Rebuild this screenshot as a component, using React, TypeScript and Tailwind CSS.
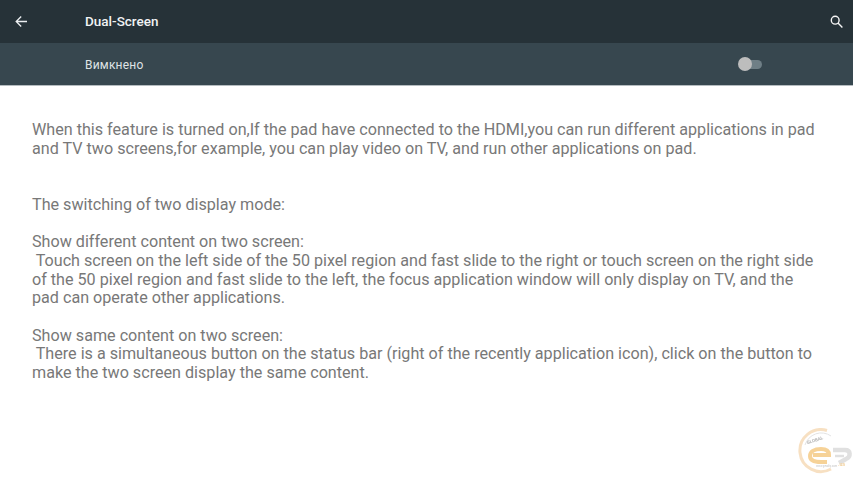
const lines = [
  "When this feature is turned on,If the pad have connected to the HDMI,you can run different applications in pad",
  "and TV two screens,for example, you can play video on TV, and run other applications on pad.",
  "\u00a0",
  "\u00a0",
  "The switching of two display mode:",
  "\u00a0",
  "Show different content on two screen:",
  " Touch screen on the left side of the 50 pixel region and fast slide to the right or touch screen on the right side",
  "of the 50 pixel region and fast slide to the left, the focus application window will only display on TV, and the",
  "pad can operate other applications.",
  "\u00a0",
  "Show same content on two screen:",
  " There is a simultaneous button on the status bar (right of the recently application icon), click on the button to",
  "make the two screen display the same content.",
];

export default function App() {
  return (
    <div className="relative w-[853px] h-[480px] overflow-hidden bg-white font-['Roboto',sans-serif]">
      <header className="h-[43px] bg-[#263238] flex items-center text-white">
        <div className="w-[85px] pl-[15px] flex items-center">
          <svg width="13" height="13" viewBox="0 0 13 13" fill="none" stroke="#eceff1" strokeWidth="1.3">
            <path d="M12 6.5H1.5M6.2 1.5 1.2 6.5l5 5" />
          </svg>
        </div>
        <h1 className="flex-1 text-[13.5px] font-medium text-[#f1f3f4]">Dual-Screen</h1>
        <div className="pr-[10px] flex items-center">
          <svg width="13" height="13" viewBox="0 0 13 13" fill="none" stroke="#f5f5f5" strokeWidth="1.4">
            <circle cx="5.2" cy="5.2" r="3.9" />
            <path d="m8 8 4.4 4.4" />
          </svg>
        </div>
      </header>
      <div className="h-[43px] bg-[#37474f] flex items-center border-b border-[#b5bcc0] pt-[1px]">
        <span className="ml-[85px] flex-1 text-[12px] tracking-[0.2px] text-[#dfe3e5]">Вимкнено</span>
        <div className="relative mr-[91px] mb-[1px] w-[24px] h-[14px] flex items-center">
          <div className="ml-[3px] w-[21px] h-[9px] rounded-full bg-[#6f7f86]" />
          <div className="absolute left-0 top-0 w-[14px] h-[14px] rounded-full bg-[#bdbdbd]" />
        </div>
      </div>
      <main className="pt-[35px] pl-[32px] text-[16.15px] leading-[18.7px] text-[#787878] whitespace-pre">
        {lines.map((l, i) => (
          <div key={i}>{l}</div>
        ))}
      </main>
      <div className="absolute left-[797px] top-[428px] w-[56px] h-[48px] opacity-80 blur-[0.5px]">
        <svg width="56" height="48" viewBox="0 0 56 48" fill="none">
          <path d="M30 2.5A21 21 0 1 0 34 41" stroke="#f6d9b4" strokeWidth="3" />
          <path d="M8 17A17 17 0 0 1 34 8" stroke="#dcdcdc" strokeWidth="1" />
          <path d="M16 27H32C32 22 28 21 24 21 17 21 13 24 13 28 13 32 17 34 24 34H30" stroke="#f5c77e" strokeWidth="4" />
          <path d="M36 22H48C54 22 54 29 49 31L42 35" stroke="#d9d9d9" strokeWidth="4.5" />
          <path d="M38 28H47" stroke="#d9d9d9" strokeWidth="2.5" />
          <text x="10" y="16" fontSize="4.5" fill="#a0a0a0" fontFamily="Roboto, sans-serif" fontWeight="700" transform="rotate(-18 11 15)">GLOBAL</text>
          <text x="19" y="38.5" fontSize="2.8" fill="#b5b5b5" fontFamily="Roboto, sans-serif">www.geodiy.com</text>
          <text x="41" y="38" fontSize="5" fill="#f0c98c" fontFamily="Roboto, sans-serif" fontWeight="700">.ua</text>
        </svg>
      </div>
    </div>
  );
}
